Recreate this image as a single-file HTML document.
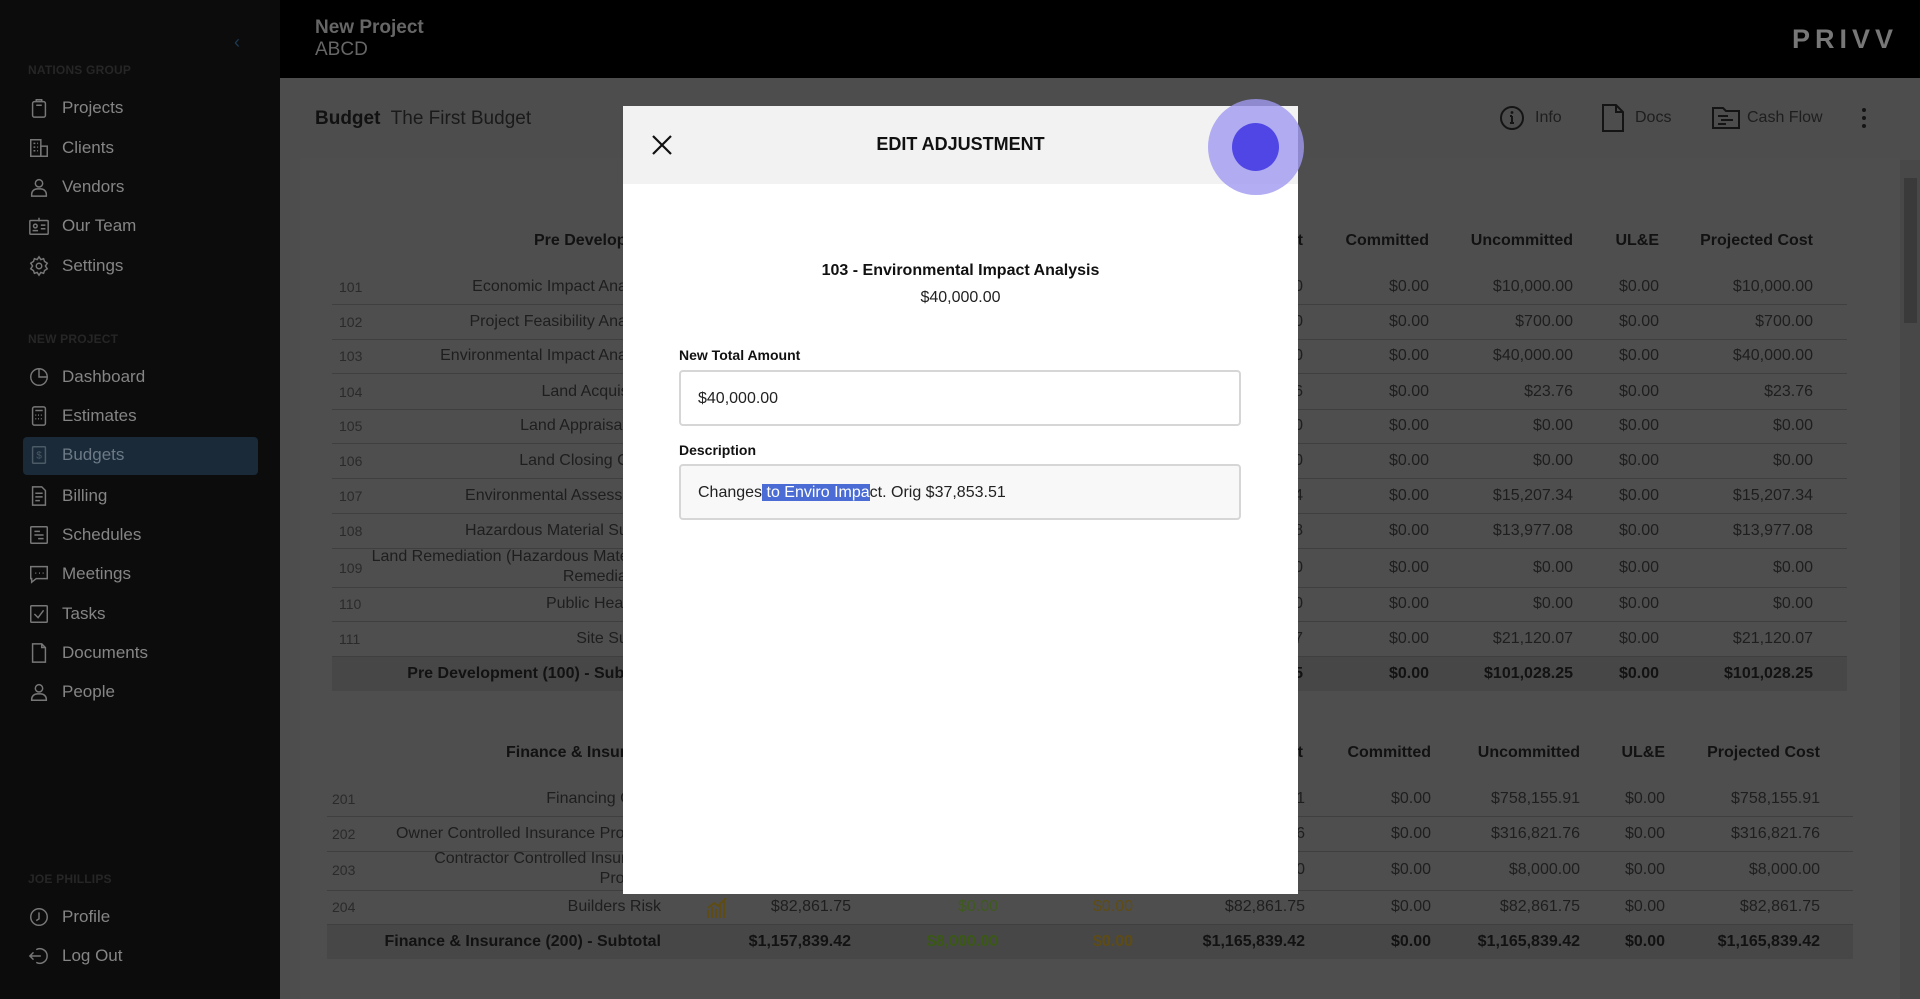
<!DOCTYPE html>
<html><head><meta charset="utf-8">
<style>
*{margin:0;padding:0;box-sizing:border-box}
body{width:1920px;height:999px;overflow:hidden;background:#4d4d4d;font-family:"Liberation Sans",sans-serif;position:relative}
.a{position:absolute;white-space:nowrap}
#side{position:absolute;left:0;top:0;width:280px;height:999px;background:#0c0c0c}
.sec{position:absolute;left:28px;font-size:12px;font-weight:bold;color:#262626;letter-spacing:.2px}
.it{position:absolute;left:28px;height:30px;display:flex;align-items:center;font-size:17px;color:#858585}
.it svg{width:22px;height:22px;margin-right:12px;stroke:#777;fill:none;stroke-width:1.6}
#hdr{position:absolute;left:280px;top:0;width:1640px;height:78px;background:#000}
.r{position:absolute;font-size:16px;color:#1e1e1e;white-space:nowrap;line-height:20px}
.h{font-weight:bold;color:#121212}
.line{position:absolute;height:1px;background:#3f3f3f}
.band{position:absolute;background:#474747}
</style></head><body>
<div id="side">
 <div class="a" style="left:234px;top:32px;color:#1e3a52;font-size:18px">‹</div>
 <div class="sec" style="top:63px">NATIONS GROUP</div>
 <div class="it" style="top:93px"><svg viewBox="0 0 24 24"><rect x="5" y="5" width="14" height="17" rx="2"/><path d="M9 5V3h6v2M9 9h6"/></svg>Projects</div>
 <div class="it" style="top:133px"><svg viewBox="0 0 24 24"><rect x="3" y="3" width="11" height="18"/><rect x="14" y="10" width="7" height="11"/><path d="M6 7h2M10 7h1M6 11h2M10 11h1M6 15h2M10 15h1"/></svg>Clients</div>
 <div class="it" style="top:172px"><svg viewBox="0 0 24 24"><circle cx="12" cy="8" r="4"/><path d="M4 22v-2a6 6 0 0 1 6-6h4a6 6 0 0 1 6 6v2z"/></svg>Vendors</div>
 <div class="it" style="top:211px"><svg viewBox="0 0 24 24"><rect x="2" y="6" width="20" height="15" rx="1"/><circle cx="8" cy="12" r="2"/><path d="M5 17h6M14 11h5M14 15h5M12 3v4"/></svg>Our Team</div>
 <div class="it" style="top:251px"><svg viewBox="0 0 24 24"><circle cx="12" cy="12" r="3"/><path d="M12 2l2 3 3-1 1 3 3 2-2 3 2 3-3 2-1 3-3-1-2 3-2-3-3 1-1-3-3-2 2-3-2-3 3-2 1-3 3 1z"/></svg>Settings</div>
 <div class="sec" style="top:332px">NEW PROJECT</div>
 <div class="it" style="top:362px"><svg viewBox="0 0 24 24"><circle cx="12" cy="12" r="9"/><path d="M12 3v9h9"/></svg>Dashboard</div>
 <div class="it" style="top:401px"><svg viewBox="0 0 24 24"><rect x="5" y="2" width="14" height="20" rx="2"/><path d="M8 6h8M8 11h1M11 11h1M14 11h1M8 15h1M11 15h1M14 15h1"/></svg>Estimates</div>
 <div style="position:absolute;left:23px;top:437px;width:235px;height:38px;background:#1a2a38;border-radius:4px"></div>
 <div class="it" style="top:440px;color:#6d7a86"><svg viewBox="0 0 24 24" style="stroke:#4c5a66"><rect x="5" y="3" width="14" height="18" rx="1"/><text x="9" y="16" font-size="11" fill="#4c5a66" stroke="none">$</text></svg>Budgets</div>
 <div class="it" style="top:481px"><svg viewBox="0 0 24 24"><path d="M5 2h10l4 4v16H5z"/><path d="M8 9h8M8 13h8M8 17h5"/></svg>Billing</div>
 <div class="it" style="top:520px"><svg viewBox="0 0 24 24"><rect x="3" y="3" width="18" height="18" rx="1"/><path d="M7 8h6M7 12h10M11 16h6"/></svg>Schedules</div>
 <div class="it" style="top:559px"><svg viewBox="0 0 24 24"><path d="M3 4h18v13H9l-5 4v-4H3z"/><path d="M8 11h1M12 11h1M16 11h1"/></svg>Meetings</div>
 <div class="it" style="top:599px"><svg viewBox="0 0 24 24"><rect x="3" y="3" width="18" height="18" rx="1"/><path d="M7 12l4 4 6-8"/></svg>Tasks</div>
 <div class="it" style="top:638px"><svg viewBox="0 0 24 24"><path d="M5 2h10l4 4v16H5z"/><path d="M15 2v4h4"/></svg>Documents</div>
 <div class="it" style="top:677px"><svg viewBox="0 0 24 24"><circle cx="12" cy="8" r="4"/><path d="M4 21v-1a6 6 0 0 1 6-6h4a6 6 0 0 1 6 6v1z"/></svg>People</div>
 <div class="sec" style="top:872px">JOE PHILLIPS</div>
 <div class="it" style="top:902px"><svg viewBox="0 0 24 24"><circle cx="12" cy="12" r="9"/><path d="M12 7v7l-3 2"/></svg>Profile</div>
 <div class="it" style="top:941px"><svg viewBox="0 0 24 24"><path d="M9 5a8 8 0 1 1 0 14"/><path d="M14 12H2M6 8l-4 4 4 4"/></svg>Log Out</div>
</div>
<div id="hdr">
 <div class="a" style="left:35px;top:17px;font-size:19px;font-weight:bold;color:#666">New Project</div>
 <div class="a" style="left:35px;top:39px;font-size:19px;color:#666">ABCD</div>
 <div class="a" style="right:22px;top:24px;font-size:27px;font-weight:bold;color:#777;letter-spacing:5px">PRIVV</div>
</div>
<div class="a" style="left:315px;top:108px;font-size:19px;color:#111"><b>Budget</b>&nbsp; <span style="color:#1a1a1a">The First Budget</span></div>
<svg class="a" style="left:1499px;top:105px" width="26" height="26" viewBox="0 0 26 26"><circle cx="13" cy="13" r="11" fill="none" stroke="#141414" stroke-width="2"/><path d="M13 11v7M11 18h4M11 11h2" stroke="#141414" stroke-width="2" fill="none"/><circle cx="13" cy="7.5" r="1.4" fill="#141414"/></svg>
<div class="a" style="left:1535px;top:109px;font-size:16px;color:#1e1e1e">Info</div>
<svg class="a" style="left:1601px;top:103px" width="24" height="30" viewBox="0 0 24 30"><path d="M2 2h13l7 7v19H2z M15 2v7h7" fill="none" stroke="#141414" stroke-width="2"/></svg>
<div class="a" style="left:1635px;top:109px;font-size:16px;color:#1e1e1e">Docs</div>
<svg class="a" style="left:1711px;top:104px" width="30" height="26" viewBox="0 0 30 26"><path d="M2 4h10l3 3h13v17H2z" fill="none" stroke="#141414" stroke-width="2"/><path d="M7 12h10M10 16h12M7 20h8" stroke="#141414" stroke-width="2"/></svg>
<div class="a" style="left:1747px;top:109px;font-size:16px;color:#1e1e1e">Cash Flow</div>
<svg class="a" style="left:1860px;top:106px" width="8" height="24"><circle cx="4" cy="4" r="2" fill="#141414"/><circle cx="4" cy="12" r="2" fill="#141414"/><circle cx="4" cy="20" r="2" fill="#141414"/></svg>
<div style="position:absolute;left:300px;top:158px;width:1600px;height:841px;background:#4e4e4e"></div>
<div style="position:absolute;left:1900px;top:160px;width:20px;height:839px;background:#484848"></div>
<div style="position:absolute;left:1904px;top:178px;width:13px;height:145px;background:#3a3a3a"></div>

<div class="r h" style="left:534px;top:231px">Pre Development (100)</div>
<div class="r h" style="right:617px;top:231px">Current Budget</div>
<div class="r h" style="right:491px;top:231px">Committed</div>
<div class="r h" style="right:347px;top:231px">Uncommitted</div>
<div class="r h" style="right:261px;top:231px">UL&amp;E</div>
<div class="r h" style="right:107px;top:231px">Projected Cost</div>
<div id="t1"></div>
<div id="t2"></div>
<script>
function rows(cont,data,cols,xnum,lineL,lineR){
 let h='';
 data.forEach((d,i)=>{
  const y=d.y;
  if(d.sub){h+=`<div class="band" style="left:${lineL}px;top:${y-17}px;width:${lineR-lineL}px;height:34px"></div>`;}
  else h+=`<div class="r" style="left:${xnum}px;top:${y-10}px;color:#2a2a2a;font-size:14px">${d.n}</div>`;
  if(d.d2){h+=`<div class="r" style="right:${1920-cols[0]}px;top:${y-21}px;text-align:right;line-height:20px">${d.d}<br>${d.d2}</div>`}
  else h+=`<div class="r${d.sub?' h':''}" style="right:${1920-cols[0]}px;top:${y-10}px">${d.d}</div>`;
  d.v.forEach((v,j)=>{let c=d.c&&d.c[j]?`color:${d.c[j]};`:'';h+=`<div class="r${d.sub?' h':''}" style="right:${1920-cols[j+1]}px;top:${y-10}px;${c}">${v}</div>`});
  if(!d.sub)h+=`<div class="line" style="left:${lineL}px;width:${lineR-lineL}px;top:${y+(d.lh||17)}px"></div>`;
 });
 document.getElementById(cont).innerHTML=h;
}
const pc=['$10,000.00','$700.00','$40,000.00','$23.76','$0.00','$0.00','$15,207.34','$13,977.08','$0.00','$0.00','$21,120.07'];
const ys=[287,322,356,392,426,461,496,531,568,604,639];
const ds=['Economic Impact Analysis','Project Feasibility Analysis','Environmental Impact Analysis','Land Acquisition','Land Appraisal Fee','Land Closing Costs','Environmental Assessment','Hazardous Material Survey','Land Remediation (Hazardous Materials','Public Hearings','Site Survey'];
let d1=ds.map((d,i)=>({n:101+i,y:ys[i],d:d,v:[pc[i],'$0.00','$0.00',pc[i],'$0.00',pc[i],'$0.00',pc[i]],lh:i==8?19:17}));
d1[8].d2='Remediation)';
d1.push({sub:1,y:674,d:'Pre Development (100) - Subtotal',v:['$101,028.25','$0.00','$0.00','$101,028.25','$0.00','$101,028.25','$0.00','$101,028.25']});
rows('t1',d1,[658,851,998,1133,1303,1429,1573,1659,1813],339,332,1847);
let c2=[661,851,998,1133,1305,1431,1580,1665,1820];
let d2=[
{n:201,y:799,d:'Financing Costs',v:['$758,155.91','$0.00','$0.00','$758,155.91','$0.00','$758,155.91','$0.00','$758,155.91']},
{n:202,y:834,d:'Owner Controlled Insurance Program',v:['$316,821.76','$0.00','$0.00','$316,821.76','$0.00','$316,821.76','$0.00','$316,821.76']},
{n:203,y:870,d:'Contractor Controlled Insurance',d2:'Program',v:['$8,000.00','$0.00','$0.00','$8,000.00','$0.00','$8,000.00','$0.00','$8,000.00'],lh:20},
{n:204,y:907,d:'Builders Risk',v:['$82,861.75','$0.00','$0.00','$82,861.75','$0.00','$82,861.75','$0.00','$82,861.75'],c:[0,'#3f5a1e','#5e4c14']},
{sub:1,y:942,d:'Finance &amp; Insurance (200) - Subtotal',v:['$1,157,839.42','$8,000.00','$0.00','$1,165,839.42','$0.00','$1,165,839.42','$0.00','$1,165,839.42'],c:[0,'#3a5a14','#5e4c14']}
];
rows('t2',d2,c2,332,327,1853);
</script>
<svg class="a" style="left:706px;top:896px" width="22" height="24" viewBox="0 0 22 24"><path d="M2 22V14M6 22V11M10 22V13M14 22V8M18 22V5M2 12L8 7l4 3 8-8" stroke="#5e4c14" stroke-width="2" fill="none"/></svg>
<div class="r h" style="left:506px;top:743px">Finance &amp; Insurance (200)</div>
<div class="r h" style="right:617px;top:743px">Current Budget</div>
<div class="r h" style="right:489px;top:743px">Committed</div>
<div class="r h" style="right:340px;top:743px">Uncommitted</div>
<div class="r h" style="right:255px;top:743px">UL&amp;E</div>
<div class="r h" style="right:100px;top:743px">Projected Cost</div>

<div style="position:absolute;left:623px;top:106px;width:675px;height:788px;background:#fff">
 <div style="height:78px;background:#f2f2f2;position:relative">
  <svg class="a" style="left:27px;top:27px" width="24" height="24" viewBox="0 0 24 24"><path d="M3 3l18 18M21 3L3 21" stroke="#111" stroke-width="2.2"/></svg>
  <div class="a" style="left:0;width:675px;text-align:center;top:28px;font-size:18px;font-weight:bold;color:#111">EDIT ADJUSTMENT</div>
 </div>
 <div class="a" style="left:0;width:675px;text-align:center;top:156px;font-size:16px;font-weight:bold;color:#111">103 - Environmental Impact Analysis</div>
 <div class="a" style="left:0;width:675px;text-align:center;top:183px;font-size:16px;color:#222">$40,000.00</div>
 <div class="a" style="left:56px;top:241px;font-size:14px;font-weight:bold;color:#111">New Total Amount</div>
 <div class="a" style="left:56px;top:264px;width:562px;height:56px;border:2px solid #d6d6d6;border-radius:4px;background:#fff;padding:18px 0 0 17px;font-size:16px;color:#222">$40,000.00</div>
 <div class="a" style="left:56px;top:336px;font-size:14px;font-weight:bold;color:#111">Description</div>
 <div class="a" style="left:56px;top:358px;width:562px;height:56px;border:2px solid #d6d6d6;border-radius:4px;background:#f8f8f8;padding:18px 0 0 17px;font-size:16px;color:#222">Changes<span style="background:#4a6cd4;color:#fff"> to Enviro Impa</span>ct. Orig $37,853.51</div>
</div>
<div style="position:absolute;left:1208px;top:99px;width:96px;height:96px;border-radius:50%;background:rgba(160,152,240,.8)"></div>
<div style="position:absolute;left:1232px;top:123px;width:47px;height:48px;border-radius:50%;background:#4f46e5"></div>
</body></html>
